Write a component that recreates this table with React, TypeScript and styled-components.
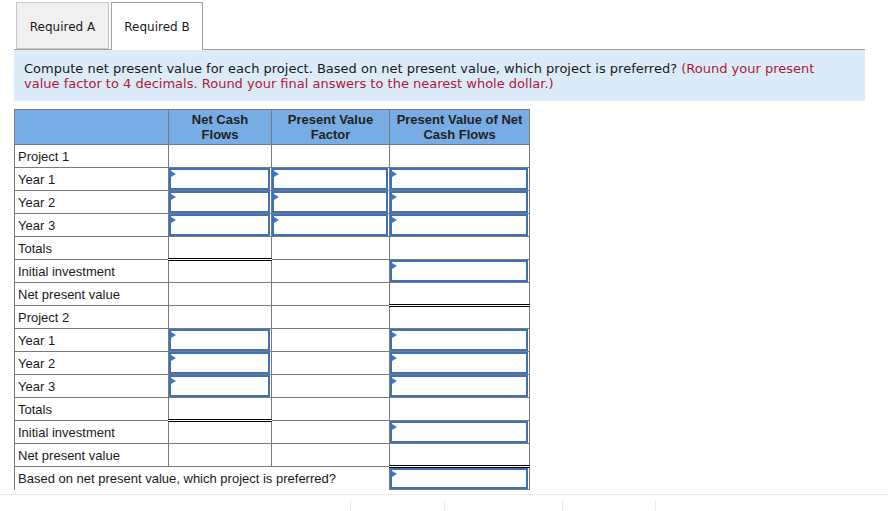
import React from "react";
import styled, { createGlobalStyle } from "styled-components";

const Global = createGlobalStyle`
  html, body { margin: 0; padding: 0; background: #fff; }
  body { width: 888px; height: 511px; overflow: hidden; }
`;

const Page = styled.div`
  width: 888px;
  height: 511px;
  display: flex;
  flex-direction: column;
`;

const TabBar = styled.div`
  display: flex;
  gap: 2px;
  margin: 2px 23px 0 14px;
  padding-left: 2px;
  border-bottom: 1px solid #a0a0a0;
  height: 47px;
`;

const Tab = styled.div<{ $active?: boolean }>`
  width: ${(p) => (p.$active ? 92 : 93)}px;
  box-sizing: border-box;
  height: ${(p) => (p.$active ? 48 : 47)}px;
  display: flex;
  align-items: center;
  justify-content: center;
  padding-top: ${(p) => (p.$active ? 1 : 2)}px;
  font-family: "DejaVu Sans", Verdana, sans-serif;
  font-size: 12px;
  color: #1a1a1a;
  background: ${(p) => (p.$active ? "#fff" : "#f0f0f0")};
  border: 1px solid ${(p) => (p.$active ? "#a0a0a0" : "#c8c8c8")};
  border-bottom: ${(p) => (p.$active ? "none" : "1px solid #c8c8c8")};
`;

const Instructions = styled.div`
  margin: 0 23px 0 14px;
  background: #dbebf8;
  height: 51px;
  box-sizing: border-box;
  padding: 11px 30px 0 10px;
  font-family: "DejaVu Sans", Verdana, sans-serif;
  font-size: 13px;
  line-height: 15px;
  color: #1a1a1a;
`;

const Red = styled.span`
  color: #b01a36;
`;

const Table = styled.table`
  margin: 8px 0 0 14px;
  width: 515px;
  border-collapse: collapse;
  font-family: "Liberation Sans", Arial, sans-serif;
  font-size: 13px;
  color: #1a1a1a;
  table-layout: fixed;
`;

const Th = styled.th`
  background: #78ace4;
  border: 1px solid #7a7a7a;
  font-weight: bold;
  height: 35px;
  padding: 2px 2px 0;
  vertical-align: top;
  box-sizing: border-box;
  line-height: 15px;
  text-align: center;
  color: #222;
`;

const Td = styled.td<{ $top?: boolean; $double?: boolean }>`
  border: 1px solid #7a7a7a;
  ${(p) => (p.$top ? "border-top: 1px solid #000;" : "")}
  ${(p) => (p.$double ? "border-bottom: 3px double #000;" : "")}
  height: 23px;
  padding: 0;
  box-sizing: border-box;
  position: relative;
`;

const LabelTd = styled.td<{ $last?: boolean }>`
  border: 1px solid #7a7a7a;
  ${(p) => (p.$last ? "border-bottom: none; border-right: none;" : "")}
  height: 23px;
  padding: 1px 0 0 3px;
  box-sizing: border-box;
  white-space: nowrap;
`;

const InputBox = styled.div`
  position: absolute;
  inset: 0;
  margin: 0 1px 0 0;
  border: 2px solid #3d72b8;
  background: #fff;
  &::before {
    content: "";
    position: absolute;
    left: 0;
    top: 1px;
    border-left: 5px solid #3d78c4;
    border-top: 3px solid transparent;
    border-bottom: 3px solid transparent;
  }
`;

const Footer = styled.div`
  margin-top: auto;
  height: 16px;
  border-top: 1px solid #ececec;
  display: flex;
  padding-left: 350px;
`;

const FooterCell = styled.div<{ $w: number }>`
  width: ${(p) => p.$w}px;
  margin-top: 5px;
  border-left: 1px solid #ececec;
`;

type Cell = "" | "in" | "tot" | "npv" | "top";
type Row = { label: string; cells: [Cell, Cell, Cell] };

const project = (n: number): Row[] => [
  { label: `Project ${n}`, cells: ["", "", ""] },
  { label: "Year 1", cells: ["in", n === 1 ? "in" : "", "in"] },
  { label: "Year 2", cells: ["in", n === 1 ? "in" : "", "in"] },
  { label: "Year 3", cells: ["in", n === 1 ? "in" : "", "in"] },
  { label: "Totals", cells: ["tot", "", "top"] },
  { label: "Initial investment", cells: ["", "", "in"] },
  { label: "Net present value", cells: ["", "", "npv"] },
];

const rows: Row[] = [...project(1), ...project(2)];

function renderCell(c: Cell, i: number) {
  if (c === "in")
    return (
      <Td key={i}>
        <InputBox />
      </Td>
    );
  if (c === "tot" || c === "npv") return <Td key={i} $top $double />;
  if (c === "top") return <Td key={i} $top />;
  return <Td key={i} />;
}

export default function App() {
  return (
    <Page>
      <Global />
      <TabBar>
        <Tab>Required A</Tab>
        <Tab $active>Required B</Tab>
      </TabBar>
      <Instructions>
        Compute net present value for each project. Based on net present value, which project is preferred?{" "}
        <Red>(Round your present value factor to 4 decimals. Round your final answers to the nearest whole dollar.)</Red>
      </Instructions>
      <Table>
        <colgroup>
          <col style={{ width: 154 }} />
          <col style={{ width: 103 }} />
          <col style={{ width: 118 }} />
          <col style={{ width: 140 }} />
        </colgroup>
        <thead>
          <tr>
            <Th />
            <Th>
              Net Cash
              <br />
              Flows
            </Th>
            <Th>
              Present Value
              <br />
              Factor
            </Th>
            <Th>
              Present Value of Net
              <br />
              Cash Flows
            </Th>
          </tr>
        </thead>
        <tbody>
          {rows.map((r, idx) => (
            <tr key={idx}>
              <LabelTd>{r.label}</LabelTd>
              {r.cells.map((c, i) => renderCell(c, i))}
            </tr>
          ))}
          <tr>
            <LabelTd colSpan={3} $last>
              Based on net present value, which project is preferred?
            </LabelTd>
            <Td>
              <InputBox />
            </Td>
          </tr>
        </tbody>
      </Table>
      <Footer>
        <FooterCell $w={93} />
        <FooterCell $w={117} />
        <FooterCell $w={92} />
        <FooterCell $w={100} />
      </Footer>
    </Page>
  );
}
